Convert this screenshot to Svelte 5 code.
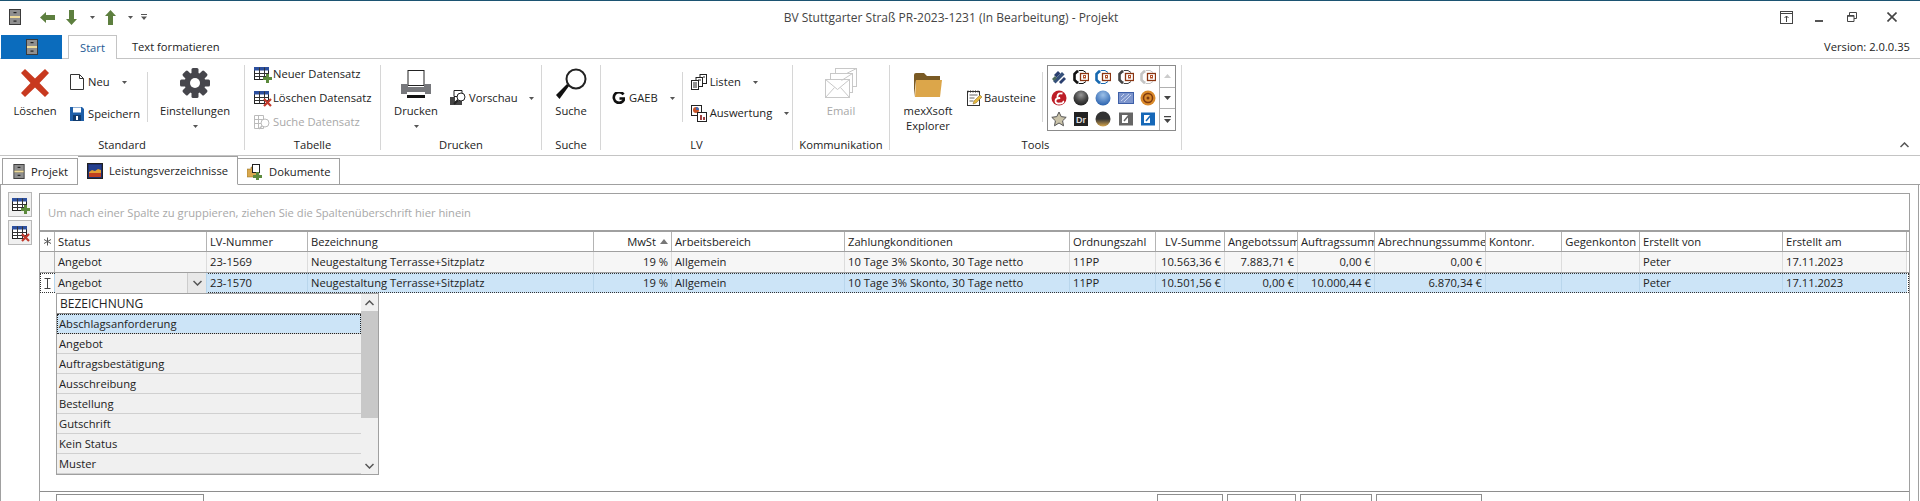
<script lang="ts">
  const columns = [
    { label: 'Status', width: 152 },
    { label: 'LV-Nummer', width: 101 },
    { label: 'Bezeichnung', width: 286 },
    { label: 'MwSt', width: 78, right: true, sorted: true },
    { label: 'Arbeitsbereich', width: 173 },
    { label: 'Zahlungkonditionen', width: 225 },
    { label: 'Ordnungszahl', width: 86 },
    { label: 'LV-Summe', width: 69, right: true },
    { label: 'Angebotssumme', width: 73 },
    { label: 'Auftragssumme', width: 77 },
    { label: 'Abrechnungssumme', width: 111 },
    { label: 'Kontonr.', width: 76 },
    { label: 'Gegenkonton', width: 78, right: true },
    { label: 'Erstellt von', width: 143 },
    { label: 'Erstellt am', width: 124 }
  ];
  const template = '15px ' + columns.map((c) => c.width + 'px').join(' ');
  const rightCols = [3, 7, 8, 9, 10];

  const rows = [
    ['Angebot', '23-1569', 'Neugestaltung Terrasse+Sitzplatz', '19 %', 'Allgemein', '10 Tage 3% Skonto, 30 Tage netto', '11PP', '10.563,36 €', '7.883,71 €', '0,00 €', '0,00 €', '', '', 'Peter', '17.11.2023'],
    ['Angebot', '23-1570', 'Neugestaltung Terrasse+Sitzplatz', '19 %', 'Allgemein', '10 Tage 3% Skonto, 30 Tage netto', '11PP', '10.501,56 €', '0,00 €', '10.000,44 €', '6.870,34 €', '', '', 'Peter', '17.11.2023']
  ];

  const options = ['Abschlagsanforderung', 'Angebot', 'Auftragsbestätigung', 'Ausschreibung', 'Bestellung', 'Gutschrift', 'Kein Status', 'Muster'];
  const gallery = ['stripes', 'black', 'blue', 'dark', 'light', 'red', 'sphere', 'bluesphere', 'pattern', 'swirl', 'star', 'dr', 'goldsphere', 'greydoc', 'bluedoc'];
  const hexColors = { black: '#111', blue: '#1668b0', dark: '#444', light: '#c4c4c4' };
</script>

{#snippet caret()}
  <svg class="caret" width="5" height="3" viewBox="0 0 5 3"><path d="M0 0h5L2.5 3z" fill="#555" /></svg>
{/snippet}

{#snippet tableIcon(size)}
  <svg width={size} height={size} viewBox="0 0 16 16">
    <rect x="0.5" y="1.5" width="14" height="12" fill="#fff" stroke="#222" />
    <rect x="0" y="1" width="15" height="3.5" fill="#2c4f9e" />
    <path d="M0.5 7.5h14M0.5 10.5h14M5.5 1.5v12M10.5 1.5v12" stroke="#333" fill="none" />
  </svg>
{/snippet}

{#snippet plusBadge()}
  <svg class="badge" width="9" height="9" viewBox="0 0 9 9"><path d="M3 0h3v3h3v3H6v3H3V6H0V3h3z" fill="#5c8a3c" /></svg>
{/snippet}

{#snippet crossBadge()}
  <svg class="badge" width="9" height="9" viewBox="0 0 9 9"><path d="M1 1l7 7M8 1L1 8" stroke="#c0392b" stroke-width="2.2" fill="none" /></svg>
{/snippet}

{#snippet cabinet(w, h)}
  <svg width={w} height={h} viewBox="0 0 12 16">
    <rect width="12" height="16" fill="#3a3a3a" />
    <rect x="1" y="1" width="10" height="6" fill="#8f8f8f" />
    <rect x="1" y="9" width="10" height="6" fill="#8f8f8f" />
    <rect x="1" y="7" width="10" height="2" fill="#f0dc9a" />
    <rect x="4.500" y="3" width="3" height="1.200" fill="#222" />
    <rect x="4.500" y="11.500" width="3" height="1.200" fill="#222" />
  </svg>
{/snippet}

<div class="window">
  <header class="titlebar">
    <div class="quick">
      <span class="q-app">{@render cabinet(12, 16)}</span>
      <svg class="q-left" width="15" height="11" viewBox="0 0 15 11"><path d="M0 5.500L6 0v3h9v5H6v3z" fill="#5d7f3f" /></svg>
      <svg class="q-down" width="11" height="15" viewBox="0 0 11 15"><path d="M5.500 15L0 9h3V0h5v9h3z" fill="#5d7f3f" /></svg>
      <span class="q-c1">{@render caret()}</span>
      <svg class="q-up" width="11" height="15" viewBox="0 0 11 15"><path d="M5.500 0L11 6H8v9H3V6H0z" fill="#5d7f3f" /></svg>
      <span class="q-c2">{@render caret()}</span>
      <svg class="q-custom" width="6" height="6" viewBox="0 0 6 6"><path d="M0 0h6v1H0zM0 2.500h6L3 6z" fill="#555" /></svg>
    </div>
    <div class="title">BV Stuttgarter Straß PR-2023-1231 (In Bearbeitung) - Projekt</div>
    <div class="winbtns">
      <svg width="13" height="13" viewBox="0 0 13 13"><rect x="0.500" y="0.500" width="12" height="12" fill="none" stroke="#444" /><path d="M0.500 2.500h12M6.500 11V5M4.500 7l2-2 2 2" stroke="#444" fill="none" /></svg>
      <svg width="8" height="2" viewBox="0 0 8 2"><rect width="8" height="2" fill="#555" /></svg>
      <svg width="10" height="10" viewBox="0 0 10 10"><path d="M0.500 3.500h6.500v6H0.500zM2.500 3.500V0.500h7v6H7" fill="none" stroke="#444" /><path d="M0.500 4h6.500" stroke="#444" stroke-width="1.500" /></svg>
      <svg width="10" height="10" viewBox="0 0 10 10"><path d="M0.500 0.500l9 9M9.500 0.500l-9 9" stroke="#444" stroke-width="1.600" fill="none" /></svg>
    </div>
  </header>

  <div class="ribbon-tabs">
    <div class="file-btn">{@render cabinet(12, 16)}</div>
    <div class="rtab active">Start</div>
    <div class="rtab">Text formatieren</div>
    <div class="version">Version: 2.0.0.35</div>
  </div>

  <div class="ribbon">
    <section class="group">
      <div class="group-body standard">
        <div class="large loeschen">
          <svg width="28" height="28" viewBox="0 0 28 28"><path d="M4 0l10 9.500L24 0l4 4-9.500 10L28 24l-4 4-10-9.500L4 28l-4-4 9.500-10L0 4z" fill="#c8391f" /></svg>
          <span>Löschen</span>
        </div>
        <div class="stack small-pair">
          <div class="item">
            <svg width="14" height="16" viewBox="0 0 14 16"><path d="M0.500 0.500h9l4 4v11h-13z M9.500 0.500v4h4" fill="#fff" stroke="#333" /></svg>
            <span>Neu</span>{@render caret()}
          </div>
          <div class="item">
            <svg width="14" height="14" viewBox="0 0 14 14"><path d="M0 0h12l2 2v12H0z" fill="#1f5fa8" /><rect x="3" y="0.500" width="8" height="5" fill="#fff" /><rect x="3" y="8" width="8" height="6" fill="#123b6d" /><rect x="6" y="9" width="2" height="4" fill="#fff" /></svg>
            <span>Speichern</span>
          </div>
        </div>
        <div class="vsep"></div>
        <div class="large einst">
          <svg width="30" height="30" viewBox="0 0 30 30"><g fill="#46464c"><circle cx="15" cy="15" r="10.500" /><rect x="11.500" y="0" width="7" height="30" rx="1.500" /><rect x="11.500" y="0" width="7" height="30" rx="1.500" transform="rotate(45 15 15)" /><rect x="11.500" y="0" width="7" height="30" rx="1.500" transform="rotate(90 15 15)" /><rect x="11.500" y="0" width="7" height="30" rx="1.500" transform="rotate(135 15 15)" /></g><circle cx="15" cy="15" r="5" fill="#fff" /></svg>
          <span>Einstellungen</span>
          {@render caret()}
        </div>
      </div>
      <div class="group-label">Standard</div>
    </section>

    <section class="group">
      <div class="group-body tabelle">
        <div class="item"><span class="iconbox">{@render tableIcon(16)}{@render plusBadge()}</span><span>Neuer Datensatz</span></div>
        <div class="item"><span class="iconbox">{@render tableIcon(16)}{@render crossBadge()}</span><span>Löschen Datensatz</span></div>
        <div class="item disabled">
          <svg width="16" height="16" viewBox="0 0 16 16"><path d="M0.500 1.500h9v13h-9zM0.500 5.500h9M0.500 9.500h9M4.500 1.500v13" fill="none" stroke="#bbb" /><circle cx="11" cy="9" r="4" fill="#fff" stroke="#bbb" /><path d="M8 12l-3 3" stroke="#bbb" stroke-width="1.500" /></svg>
          <span>Suche Datensatz</span>
        </div>
      </div>
      <div class="group-label">Tabelle</div>
    </section>

    <section class="group">
      <div class="group-body drucken">
        <div class="large druck">
          <svg width="30" height="28" viewBox="0 0 30 28"><rect x="7" y="0.500" width="16" height="15" fill="#fff" stroke="#222" /><path d="M0 14h7v3h16v-3h7v10H0z" fill="#77787c" /><rect x="6" y="22" width="18" height="6" fill="#fff" /><rect x="6" y="25" width="18" height="3" fill="#111" /></svg>
          <span>Drucken</span>
          {@render caret()}
        </div>
        <div class="item vorschau">
          <svg width="18" height="16" viewBox="0 0 18 16"><path d="M4 0.500h8v6H4z" fill="#fff" stroke="#222" /><path d="M0 7h5v4h7v4H0z" fill="#444" /><circle cx="11" cy="7" r="4" fill="#fff" stroke="#222" /><path d="M8 10l-4 4" stroke="#222" stroke-width="2" /></svg>
          <span>Vorschau</span>{@render caret()}
        </div>
      </div>
      <div class="group-label">Drucken</div>
    </section>

    <section class="group">
      <div class="group-body suche">
        <div class="large">
          <svg width="32" height="32" viewBox="0 0 32 32"><circle cx="21" cy="11" r="9.500" fill="#fff" stroke="#222" stroke-width="2" /><path d="M14 18l-2-2-11 11 3.500 4z" fill="#111" /></svg>
          <span>Suche</span>
        </div>
      </div>
      <div class="group-label">Suche</div>
    </section>

    <section class="group">
      <div class="group-body lv">
        <div class="item gaeb">
          <svg width="13" height="12" viewBox="0 0 13 12"><path d="M11.500 2.500A5.300 5.300 0 1 0 12.300 6.500H7.500" fill="none" stroke="#111" stroke-width="2.600" /></svg>
          <span>GAEB</span>{@render caret()}
        </div>
        <div class="vsep"></div>
        <div class="stack small-pair lvlist">
          <div class="item">
            <svg width="16" height="16" viewBox="0 0 16 16"><rect x="9" y="0.500" width="6.500" height="9" fill="#fff" stroke="#222" /><rect x="5" y="3.500" width="6.500" height="9" fill="#fff" stroke="#222" /><rect x="0.500" y="6.500" width="7" height="9" fill="#fff" stroke="#222" /><path d="M2 9h4M2 11h4M2 13h4M7 6h3M12 3h2" stroke="#222" fill="none" /></svg>
            <span>Listen</span>{@render caret()}
          </div>
          <div class="item">
            <svg width="16" height="17" viewBox="0 0 16 17"><rect x="0.500" y="0.500" width="10" height="10" fill="#fff" stroke="#222" /><circle cx="5" cy="5" r="3" fill="#c8552a" /><path d="M5 5V2a3 3 0 0 1 3 3z" fill="#3f6bb5" /><rect x="6.500" y="7.500" width="9" height="9" fill="#fff" stroke="#222" /><path d="M9 10h2v5H9zM12 12h2v3h-2z" fill="#a04040" /></svg>
            <span>Auswertung</span>{@render caret()}
          </div>
        </div>
      </div>
      <div class="group-label">LV</div>
    </section>

    <section class="group">
      <div class="group-body komm">
        <div class="large disabled">
          <svg width="32" height="30" viewBox="0 0 32 30"><g fill="#fff" stroke="#c8c8c8"><rect x="10.500" y="0.500" width="21" height="18" /><rect x="5.500" y="5.500" width="22" height="19" /><rect x="0.500" y="11.500" width="24" height="18" /></g><path d="M0.500 11.500l12 10 12-10M0.500 29.500l9-10M24.500 29.500l-9-10M27.500 5.500l-11 7M31.500 .500l-10 5" fill="none" stroke="#c8c8c8" /></svg>
          <span>Email</span>
        </div>
      </div>
      <div class="group-label">Kommunikation</div>
    </section>

    <section class="group">
      <div class="group-body tools">
        <div class="large explorer">
          <svg width="30" height="24" viewBox="0 0 30 24"><path d="M1 24V2q0-2 2-2h8l3 3h13v4H3z" fill="#7a5a24" /><path d="M2 24L3 7h26l-2 17z" fill="#dca64a" /></svg>
          <span>mexXsoft<br />Explorer</span>
        </div>
        <div class="item bausteine">
          <svg width="15" height="16" viewBox="0 0 15 16"><rect x="0.500" y="1.500" width="12" height="14" fill="#fff" stroke="#333" /><path d="M1 0.500v2M3.500 0.500v2M6 0.500v2M8.500 0.500v2M11 0.500v2" stroke="#333" /><path d="M2.500 5h8M2.500 8h5M2.500 11h4" stroke="#666" /><path d="M6 14l1-3 6-6 2 2-6 6z" fill="#e6b93f" stroke="#8a6a1f" stroke-width="0.500" /></svg>
          <span>Bausteine</span>
        </div>
        <div class="vsep"></div>
        <div class="gallery">
          <div class="gallery-items">
            {#each gallery as g}
              <div class="g-item">
                <svg width="16" height="16" viewBox="0 0 16 16">
                  {#if g === 'stripes'}
                    <path d="M3 6l4-4 2.500 2.500-4 4z" fill="#2a3f6f" /><path d="M2 12l9-9 2.500 2.500-9 9z" fill="#35507a" /><path d="M1 10l3-3 2 2-3 3z" fill="#4d6b5c" /><path d="M8 13l5-5 2 2-5 5z" fill="#2a3f6f" />
                  {:else if hexColors[g]}
                    <path d="M5.500 2.500H4L1.500 5v6L4 13.500h1.500" fill="none" stroke={hexColors[g]} stroke-width="2.600" />
                    <path d="M6 1.500h4l3 2M6 14.500h4l3-2" fill="none" stroke={hexColors[g]} stroke-width="1" />
                    <rect x="7.500" y="4.500" width="8" height="7" fill="#fff" stroke="#8a3512" stroke-width="1.300" />
                    <rect x="10.500" y="6.500" width="2" height="2.500" fill="none" stroke="#b5532a" />
                  {:else if g === 'red'}
                    <circle cx="8" cy="8" r="7.500" fill="#bd1e27" /><path d="M11.500 3.500Q7 2.500 6.500 6t2.500 2Q4.500 8 4.500 11t4.500 2.500 3-2.500" fill="none" stroke="#fff" stroke-width="1.800" />
                  {:else if g === 'sphere'}
                    <circle cx="8" cy="8" r="7.500" fill="url(#g-dark)" />
                  {:else if g === 'bluesphere'}
                    <circle cx="8" cy="8" r="7.500" fill="url(#g-blue)" />
                  {:else if g === 'pattern'}
                    <rect x="0.500" y="2.500" width="15" height="11" fill="#7d95cc" stroke="#3d5fa8" /><path d="M3 11l8-7M6 12l7-7M3 7l3-3" stroke="#c8d4ee" />
                  {:else if g === 'swirl'}
                    <circle cx="8" cy="8" r="7.500" fill="#d98a2b" /><circle cx="8" cy="8" r="4.500" fill="none" stroke="#7d3a10" stroke-width="1.500" /><circle cx="8" cy="8" r="1.500" fill="#7d3a10" />
                  {:else if g === 'star'}
                    <path d="M8 1l2.200 4.600 5 .7-3.600 3.500.9 5L8 12l-4.500 2.800.9-5L.8 6.300l5-.7z" fill="#c9c2a8" stroke="#555" />
                  {:else if g === 'dr'}
                    <rect x="1" y="1" width="14" height="14" fill="#222" /><text x="8" y="12" text-anchor="middle" fill="#ddd" font-size="9" font-family="Liberation Sans, sans-serif" font-weight="700">Dr</text>
                  {:else if g === 'goldsphere'}
                    <circle cx="8" cy="8" r="7.500" fill="url(#g-gold)" />
                  {:else if g === 'greydoc' || g === 'bluedoc'}
                    <rect x="1" y="1.500" width="14" height="13" fill={g === 'greydoc' ? '#666' : '#1668b8'} /><path d="M4 4h6v8H4z" fill="#fff" /><path d="M6 10l5-6" stroke={g === 'greydoc' ? '#666' : '#1668b8'} stroke-width="1.500" />
                  {/if}
                </svg>
              </div>
            {/each}
          </div>
          <div class="gallery-scroll">
            <div><svg width="7" height="4" viewBox="0 0 7 4"><path d="M0 4l3.500-4L7 4z" fill="#ccc" /></svg></div>
            <div><svg width="7" height="4" viewBox="0 0 7 4"><path d="M0 0l3.500 4L7 0z" fill="#444" /></svg></div>
            <div><svg width="7" height="7" viewBox="0 0 7 7"><path d="M0 0h7v1.200H0zM0 3h7L3.500 7z" fill="#444" /></svg></div>
          </div>
        </div>
      </div>
      <div class="group-label">Tools</div>
    </section>

    <div class="collapse">
      <svg width="9" height="6" viewBox="0 0 9 6"><path d="M0.500 5l4-4 4 4" fill="none" stroke="#555" stroke-width="1.500" /></svg>
    </div>
  </div>

  <div class="doc-tabs">
    <div class="dtab">{@render cabinet(12, 15)}<span>Projekt</span></div>
    <div class="dtab active">
      <svg width="16" height="16" viewBox="0 0 16 16"><rect x="0.500" y="0.500" width="15" height="15" fill="#1d2f6f" stroke="#222" /><path d="M2 2h12v5l-3-1-3 2-3-1-3 2z" fill="#25408f" /><path d="M2 9l3-2 3 1 3-2 3 1v3H2z" fill="#e2a034" /><path d="M2 10h12v4H2z" fill="#c04020" /></svg>
      <span>Leistungsverzeichnisse</span>
    </div>
    <div class="dtab">
      <svg width="16" height="16" viewBox="0 0 16 16"><path d="M0 5h4V3h8v10H0z" fill="#d9a84e" stroke="#8a6a1f" stroke-width="0.500" /><rect x="5.500" y="0.500" width="7" height="8" fill="#fff" stroke="#222" /><path d="M9 8h3v3h3v3h-3v2H9v-2H6v-3h3z" fill="#5c8a3c" /></svg>
      <span>Dokumente</span>
    </div>
  </div>

  <main class="content">
    <aside class="side-tools">
      <button class="side-btn"><span class="iconbox">{@render tableIcon(16)}{@render plusBadge()}</span></button>
      <button class="side-btn"><span class="iconbox">{@render tableIcon(16)}{@render crossBadge()}</span></button>
    </aside>

    <div class="grid-box">
      <div class="group-panel">Um nach einer Spalte zu gruppieren, ziehen Sie die Spaltenüberschrift hier hinein</div>

      <div class="grid-row head" style:grid-template-columns={template}>
        <div class="cell marker">
          <svg width="9" height="9" viewBox="0 0 9 9"><path d="M4.500 0.500v8M1 2.500l7 4M8 2.500l-7 4" stroke="#555" fill="none" /></svg>
        </div>
        {#each columns as col}
          <div class="cell" class:right={col.right}>
            {col.label}
            {#if col.sorted}<svg class="sort" width="8" height="5" viewBox="0 0 8 5"><path d="M0 5l4-5 4 5z" fill="#777" /></svg>{/if}
          </div>
        {/each}
      </div>

      {#each rows as row, r}
        <div class="grid-row body" class:selected={r === 1} style:grid-template-columns={template}>
          <div class="cell marker">
            {#if r === 1}
              <svg width="7" height="11" viewBox="0 0 7 11"><path d="M0.500 0.500h6M0.500 10.500h6M3.500 0.500v10" stroke="#444" fill="none" /></svg>
            {/if}
          </div>
          {#each row as value, c}
            <div class="cell" class:right={rightCols.includes(c)} class:editor={r === 1 && c === 0}>
              {value}
              {#if r === 1 && c === 0}
                <span class="editor-btn"><svg width="9" height="6" viewBox="0 0 9 6"><path d="M0.500 1l4 4 4-4" fill="none" stroke="#555" stroke-width="1.500" /></svg></span>
              {/if}
            </div>
          {/each}
        </div>
      {/each}

      <div class="grid-space">
        <div class="dropdown">
          <div class="dd-list">
            <div class="dd-search">BEZEICHNUNG</div>
            {#each options as option, i}
              <div class="dd-option" class:current={i === 0}>{option}</div>
            {/each}
          </div>
          <div class="dd-scroll">
            <div class="dd-arrow"><svg width="9" height="6" viewBox="0 0 9 6"><path d="M0.500 5l4-4 4 4" fill="none" stroke="#555" stroke-width="1.500" /></svg></div>
            <div class="dd-thumb"></div>
            <div class="dd-track"></div>
            <div class="dd-arrow"><svg width="9" height="6" viewBox="0 0 9 6"><path d="M0.500 1l4 4 4-4" fill="none" stroke="#555" stroke-width="1.500" /></svg></div>
          </div>
        </div>
      </div>

      <div class="footer">
        <div class="foot-btn first"></div>
        <div class="foot-spacer"></div>
        <div class="foot-btn w1"></div>
        <div class="foot-btn w2"></div>
        <div class="foot-btn w3"></div>
        <div class="foot-btn w4"></div>
      </div>
    </div>
  </main>

  <svg width="0" height="0" class="defs">
    <defs>
      <radialGradient id="g-dark" cx="50%" cy="30%" r="70%"><stop offset="0" stop-color="#999" /><stop offset="0.600" stop-color="#444" /><stop offset="1" stop-color="#222" /></radialGradient>
      <radialGradient id="g-blue" cx="50%" cy="30%" r="70%"><stop offset="0" stop-color="#9cc0e8" /><stop offset="1" stop-color="#2a62ae" /></radialGradient>
      <linearGradient id="g-gold" x1="0" y1="0" x2="0" y2="1"><stop offset="0" stop-color="#333" /><stop offset="0.500" stop-color="#333" /><stop offset="1" stop-color="#d9a84e" /></linearGradient>
    </defs>
  </svg>
</div>

<style>
  :global(body) {
    margin: 0;
    background: #fff;
    color: #222;
    font-family: "Open Sans", "Noto Sans", sans-serif;
    font-size: 11.2px;
    overflow: hidden;
  }

  svg {
    display: block;
    flex: none;
  }

  .window {
    width: 1920px;
    height: 501px;
    overflow: hidden;
    box-sizing: border-box;
    border-top: 1px solid #1c5472;
    display: flex;
    flex-direction: column;
  }

  .defs {
    position: absolute;
  }

  /* title bar */
  .titlebar {
    height: 32px;
    padding-bottom: 2px;
    display: grid;
    grid-template-columns: 1fr auto 1fr;
    align-items: center;
  }

  .quick {
    display: flex;
    align-items: center;
    padding-left: 9px;
  }

  .q-left { margin-left: 19px; }
  .q-down { margin-left: 11px; }
  .q-c1 { margin-left: 13px; }
  .q-up { margin-left: 10px; }
  .q-c2 { margin-left: 12px; }
  .q-custom { margin-left: 8px; }

  .title {
    color: #444;
    font-size: 12px;
    padding-right: 18px;
  }

  .winbtns {
    display: flex;
    align-items: center;
    justify-content: flex-end;
    gap: 22px;
    padding-right: 23px;
  }

  .winbtns svg:nth-child(2) { margin-top: 7px; }
  .winbtns svg:nth-child(3) { margin-left: 2px; margin-right: 8px; }

  /* ribbon tabs */
  .ribbon-tabs {
    height: 24px;
    display: flex;
    align-items: stretch;
    border-bottom: 1px solid #c4c4c4;
    box-sizing: border-box;
  }

  .file-btn {
    width: 61px;
    margin-left: 1px;
    margin-bottom: -1px;
    background: #0b6cbd;
    display: flex;
    align-items: center;
    justify-content: center;
  }

  .rtab {
    padding: 0 15px;
    display: flex;
    align-items: center;
  }

  .rtab.active {
    margin-left: 6px;
    margin-bottom: -1px;
    padding: 0 11px;
    background: #fff;
    color: #1d5a94;
    border: 1px solid #c4c4c4;
    border-bottom: none;
  }

  .version {
    margin-left: auto;
    padding-right: 10px;
    display: flex;
    align-items: center;
  }

  /* ribbon */
  .ribbon {
    position: relative;
    height: 97px;
    display: grid;
    grid-template-columns: 245px 136px 161px 59px 192px 97px 292px 1fr;
    border-bottom: 1px solid #c4c4c4;
    box-sizing: border-box;
  }

  .group {
    display: flex;
    flex-direction: column;
    min-width: 0;
    height: 85px;
    margin-top: 6px;
    border-right: 1px solid #d6d6d6;
    align-items: stretch;
  }

  .group-body {
    flex: 1;
    display: flex;
    align-items: flex-start;
    min-height: 0;
  }

  .group-label {
    text-align: center;
    height: 17px;
    line-height: 15px;
    margin-bottom: -4px;
    flex: none;
  }

  .large {
    display: flex;
    flex-direction: column;
    align-items: center;
    text-align: center;
    line-height: 15px;
    gap: 5px;
  }

  .large .caret {
    margin-top: 2px;
  }

  .item {
    display: flex;
    align-items: center;
    gap: 4px;
    height: 16px;
    white-space: nowrap;
  }

  .item > span:not(.iconbox) {
    margin-bottom: 2px;
  }

  .item .caret {
    margin-left: 8px;
  }

  .stack {
    display: flex;
    flex-direction: column;
  }

  .vsep {
    width: 1px;
    height: 50px;
    background: #d6d6d6;
    flex: none;
  }

  .disabled {
    color: #a8a8a8;
  }

  .iconbox {
    position: relative;
    display: block;
    width: 16px;
    height: 16px;
    flex: none;
  }

  .badge {
    position: absolute;
    right: -2px;
    bottom: -1px;
  }

  .standard {
    padding: 4px 0 0 14px;
  }

  .loeschen {
    width: 42px;
    gap: 6px;
  }

  .small-pair {
    margin-left: 14px;
    width: 69px;
    gap: 16px;
    padding-top: 5px;
    flex: none;
  }

  .standard .vsep {
    margin: 3px 0 0 8px;
  }

  .einst {
    width: 72px;
    margin: -1px 0 0 11px;
  }

  .tabelle {
    flex-direction: column;
    padding: 1px 0 0 9px;
    gap: 8px;
  }

  .tabelle .item {
    gap: 3px;
  }

  .drucken {
    padding: 5px 0 0 10px;
  }

  .druck {
    width: 50px;
  }

  .vorschau {
    margin: 20px 0 0 9px;
    gap: 1px;
  }

  .vorschau .caret {
    margin-left: 10px;
  }

  .suche {
    justify-content: center;
    padding-top: 3px;
  }

  .suche .large {
    gap: 3px;
  }

  .lv {
    padding: 7px 0 0 11px;
  }

  .gaeb {
    margin: 18px 7px 0 0;
  }

  .lvlist {
    margin-left: 8px;
    gap: 15px;
    padding-top: 2px;
    width: auto;
  }

  .lvlist .item {
    gap: 3px;
  }

  .lvlist .caret {
    margin-left: 9px;
  }

  .komm {
    justify-content: center;
    padding-top: 3px;
  }

  .tools {
    padding-left: 13px;
  }

  .explorer {
    width: 50px;
    gap: 6px;
    padding-top: 8px;
  }

  .bausteine {
    margin: 25px 7px 0 14px;
    gap: 2px;
    width: 68px;
    flex: none;
  }

  .tools .vsep {
    margin-top: 7px;
  }

  .gallery {
    display: flex;
    width: 129px;
    height: 66px;
    margin-left: 4px;
    border: 1px solid #8b8b8b;
    box-sizing: border-box;
    flex: none;
  }

  .gallery-items {
    flex: 1;
    display: grid;
    grid-template-columns: repeat(5, 1fr);
    grid-template-rows: repeat(3, 1fr);
  }

  .g-item {
    display: flex;
    align-items: center;
    justify-content: center;
  }

  .gallery-scroll {
    width: 15px;
    border-left: 1px solid #b0b0b0;
    display: flex;
    flex-direction: column;
  }

  .gallery-scroll div {
    flex: 1;
    display: flex;
    align-items: center;
    justify-content: center;
    border-bottom: 1px solid #b0b0b0;
  }

  .gallery-scroll div:last-child {
    border-bottom: none;
  }

  .collapse {
    position: absolute;
    right: 11px;
    bottom: 7px;
  }

  /* document tabs */
  .doc-tabs {
    height: 29px;
    padding-left: 2px;
    display: flex;
    align-items: flex-end;
    box-sizing: border-box;
    border-bottom: 1px solid #a0a0a0;
    flex: none;
  }

  .dtab {
    height: 27px;
    box-sizing: border-box;
    padding: 0 9px 0 11px;
    display: flex;
    align-items: center;
    gap: 6px;
    margin-bottom: -1px;
    border: 1px solid #a0a0a0;
    border-left: none;
    background: #fff;
  }

  .dtab:first-child {
    padding-left: 10px;
    border-left: 1px solid #a0a0a0;
  }

  .dtab:last-child {
    padding-left: 9px;
  }

  .dtab.active {
    height: 29px;
    padding-left: 9px;
    border-bottom-color: #fff;
  }

  /* content */
  .content {
    flex: 1;
    min-height: 0;
    display: flex;
    border-left: 1px solid #a0a0a0;
    border-right: 1px solid #a0a0a0;
    margin-right: 1px;
    padding: 7px 8px 0 7px;
    gap: 7px;
  }

  .side-tools {
    display: flex;
    flex-direction: column;
    gap: 3px;
  }

  .side-btn {
    width: 24px;
    height: 25px;
    padding: 0;
    border: 1px solid #b8b8b8;
    background: #f0f0f0;
    display: flex;
    align-items: center;
    justify-content: center;
  }

  .grid-box {
    flex: 1;
    min-width: 0;
    margin-top: 1px;
    display: flex;
    flex-direction: column;
    border: 1px solid #a0a0a0;
    border-bottom: none;
  }

  .group-panel {
    height: 38px;
    padding-left: 8px;
    display: flex;
    align-items: center;
    color: #a8a8a8;
    border-bottom: 2px solid #a0a0a0;
    box-sizing: border-box;
    flex: none;
  }

  .grid-row {
    display: grid;
    flex: none;
    box-sizing: border-box;
  }

  .head {
    height: 20px;
    border-bottom: 1px solid #a0a0a0;
  }

  .body {
    height: 21px;
    border-bottom: 1px solid #a0a0a0;
  }

  .body .cell {
    background: #f6f6f6;
    border-right: 1px solid #dcdcdc;
  }

  .head .cell {
    border-right: 1px solid #b4b4b4;
  }

  .cell {
    padding: 0 3px 1px;
    display: flex;
    align-items: center;
    white-space: nowrap;
    overflow: hidden;
    min-width: 0;
    box-sizing: border-box;
    gap: 4px;
  }

  .cell.right {
    justify-content: flex-end;
  }

  .head .cell.marker,
  .body .cell.marker {
    padding: 0;
    justify-content: center;
    background: #fff;
    border-right: 1px solid #b4b4b4;
  }

  .body:not(.selected) .cell.marker {
    background: #f6f6f6;
  }

  .body.selected {
    height: 20px;
    outline: 1px dotted #333;
    outline-offset: -1px;
    border-bottom: none;
  }

  .body.selected .cell {
    background: #cce4f7;
    border-right-color: #b9d6ec;
  }

  .body.selected .cell.marker {
    background: #fff;
  }

  .body.selected .cell.editor {
    background: #f0f0f0;
    position: relative;
  }

  .editor-btn {
    position: absolute;
    right: 0;
    top: 0;
    bottom: 0;
    width: 18px;
    background: #e8e8e8;
    border-left: 1px solid #ccc;
    display: flex;
    align-items: center;
    justify-content: center;
  }

  .grid-space {
    flex: 1;
    min-height: 0;
    position: relative;
    border-bottom: 1px solid #8e8e8e;
  }

  .dropdown {
    position: absolute;
    left: 16px;
    top: 0;
    width: 323px;
    height: 182px;
    box-sizing: border-box;
    border: 1px solid #a0a0a0;
    display: flex;
    background: #f0f0f0;
  }

  .dd-list {
    flex: 1;
    min-width: 0;
  }

  .dd-search {
    height: 20px;
    box-sizing: border-box;
    padding: 0 0 1px 3px;
    background: #fff;
    display: flex;
    align-items: center;
    font-size: 12px;
    border-bottom: 1px solid #888;
  }

  .dd-option {
    height: 20px;
    box-sizing: border-box;
    padding: 0 0 1px 2px;
    display: flex;
    align-items: center;
    border-bottom: 1px solid #d0d0d0;
  }

  .dd-option.current {
    background: #cce4f7;
    outline: 1px dotted #222;
    outline-offset: -1px;
  }

  .dd-scroll {
    width: 17px;
    display: flex;
    flex-direction: column;
    flex: none;
  }

  .dd-arrow {
    height: 17px;
    display: flex;
    align-items: center;
    justify-content: center;
  }

  .dd-thumb {
    height: 107px;
    background: #c8c8c8;
  }

  .dd-track {
    flex: 1;
  }

  .footer {
    height: 7px;
    display: flex;
    padding: 2px 0 0 16px;
    gap: 4px;
    flex: none;
  }

  .foot-btn {
    border: 1px solid #8e8e8e;
    border-bottom: none;
    box-sizing: border-box;
    height: 7px;
  }

  .foot-btn.first { width: 148px; }
  .foot-spacer { width: 945px; }
  .foot-btn.w1 { width: 66px; }
  .foot-btn.w2 { width: 69px; }
  .foot-btn.w3 { width: 72px; }
  .foot-btn.w4 { width: 106px; }
</style>
